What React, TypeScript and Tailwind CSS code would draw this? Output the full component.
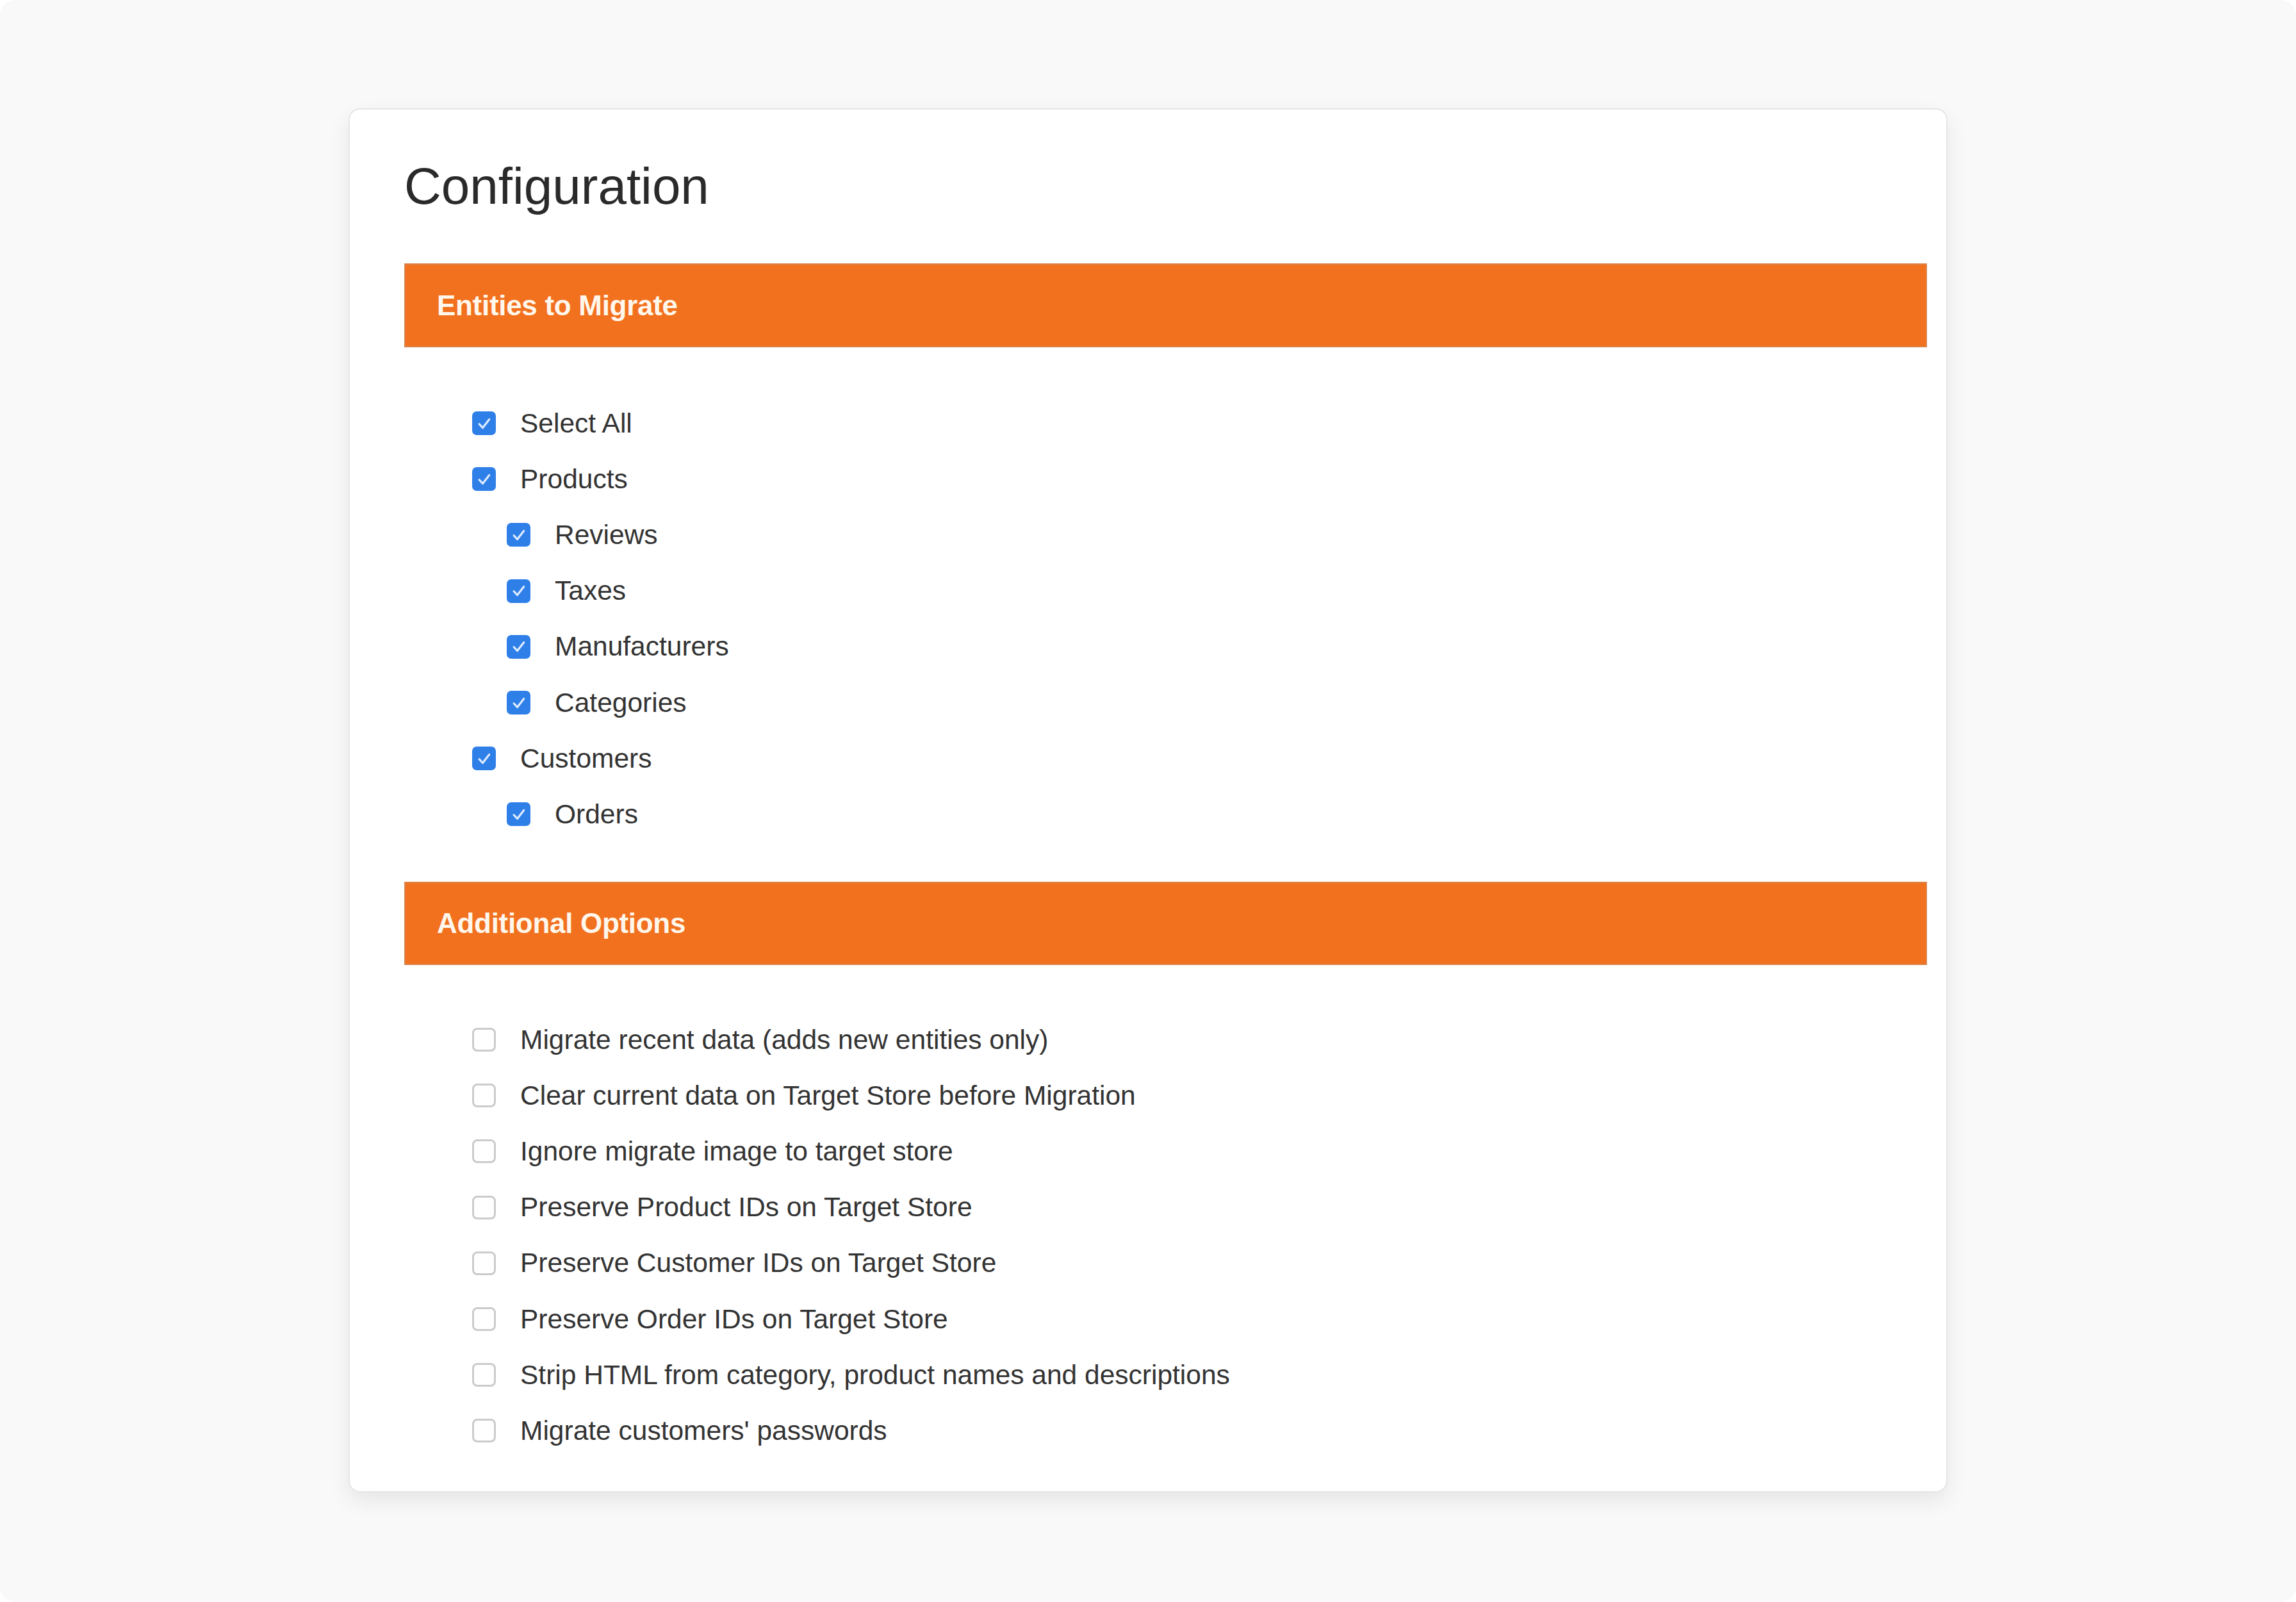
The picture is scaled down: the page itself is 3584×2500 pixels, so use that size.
import React from "react";

type Item = { label: string; child?: boolean; checked: boolean };

const entities: Item[] = [
  { label: "Select All", checked: true },
  { label: "Products", checked: true },
  { label: "Reviews", child: true, checked: true },
  { label: "Taxes", child: true, checked: true },
  { label: "Manufacturers", child: true, checked: true },
  { label: "Categories", child: true, checked: true },
  { label: "Customers", checked: true },
  { label: "Orders", child: true, checked: true },
];

const options: Item[] = [
  { label: "Migrate recent data (adds new entities only)", checked: false },
  { label: "Clear current data on Target Store before Migration", checked: false },
  { label: "Ignore migrate image to target store", checked: false },
  { label: "Preserve Product IDs on Target Store", checked: false },
  { label: "Preserve Customer IDs on Target Store", checked: false },
  { label: "Preserve Order IDs on Target Store", checked: false },
  { label: "Strip HTML from category, product names and descriptions", checked: false },
  { label: "Migrate customers' passwords", checked: false },
];

function Checkbox({ checked }: { checked: boolean }) {
  if (checked) {
    return (
      <span className="flex h-[37px] w-[37px] shrink-0 items-center justify-center rounded-[7px] bg-[#2f7fe8]">
        <svg viewBox="0 0 16 16" className="h-[30px] w-[30px]" fill="none">
          <path
            d="M3.8 8.4l2.9 3.1 5.4-7"
            stroke="#dcebff"
            strokeWidth="1.7"
            strokeLinecap="round"
            strokeLinejoin="round"
          />
        </svg>
      </span>
    );
  }
  return (
    <span className="h-[37px] w-[37px] shrink-0 rounded-[8px] border-[3px] border-[#cbcbcb] bg-white" />
  );
}

function SectionBar({ title, height }: { title: string; height: string }) {
  return (
    <div className={`flex items-center border-2 border-[#d9844c] bg-[#f2711f] pl-[49px] ${height}`}>
      <span className="text-[44px] font-bold tracking-[-0.3px] text-[#fff7ec]">{title}</span>
    </div>
  );
}

function CheckList({ items }: { items: Item[] }) {
  return (
    <ul>
      {items.map((item) => (
        <li
          key={item.label}
          className={`flex h-[87.2px] items-center gap-[38px] ${
            item.child ? "pl-[160px]" : "pl-[106px]"
          }`}
        >
          <Checkbox checked={item.checked} />
          <span className="text-[42.5px] text-[#333333]">{item.label}</span>
        </li>
      ))}
    </ul>
  );
}

export default function App() {
  return (
    <div className="h-[2500px] w-full bg-white font-['Liberation_Sans',Arial,sans-serif]">
      <div className="h-full rounded-[24px] bg-[#f9f9f9] pt-[169px]">
        <div className="mx-auto w-[2496px] rounded-[18px] border-2 border-[#e6e6e6] bg-white pb-[50px] pl-[85px] pr-[30px] pt-[80px] shadow-[0_14px_34px_rgba(0,0,0,0.08)]">
          <h1 className="mb-[80px] text-[80px] leading-none text-[#2a2a2a]">
            Configuration
          </h1>

          <SectionBar title="Entities to Migrate" height="h-[131px]" />
          <div className="mb-[61px] mt-[75px]">
            <CheckList items={entities} />
          </div>

          <SectionBar title="Additional Options" height="h-[130px]" />
          <div className="mt-[73.5px]">
            <CheckList items={options} />
          </div>
        </div>
      </div>
    </div>
  );
}
